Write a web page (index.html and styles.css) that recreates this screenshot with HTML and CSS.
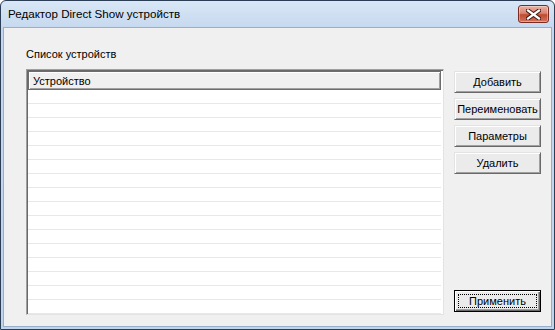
FILE: index.html
```html
<!DOCTYPE html>
<html lang="ru">
<head>
    <meta charset="UTF-8">
    <meta name="viewport" content="width=device-width, initial-scale=1.0">
    <title>Редактор Direct Show устройств</title>

    <link rel="stylesheet" href="styles.css">
</head>
<body>
    <div class="window">
        <div class="titlebar">
            <span class="title">Редактор Direct Show устройств</span>
            <button class="close" title="Закрыть">
                <svg width="15" height="11" viewBox="0 0 15 11">
                    <path d="M2 1.5 L13 9.5 M13 1.5 L2 9.5" stroke="#3b1a14" stroke-width="4.2" stroke-linecap="square"/>
                    <path d="M2 1.5 L13 9.5 M13 1.5 L2 9.5" stroke="#ffffff" stroke-width="2.2" stroke-linecap="square"/>
                </svg>
            </button>
        </div>

        <div class="client">
            <label class="caption">Список устройств</label>

            <div class="body">
                <div class="listview">
                    <div class="lv-header"><span>Устройство</span></div>
                    <div class="lv-rows">
                        <div class="row"></div>
                        <div class="row"></div>
                        <div class="row"></div>
                        <div class="row"></div>
                        <div class="row"></div>
                        <div class="row"></div>
                        <div class="row"></div>
                        <div class="row"></div>
                        <div class="row"></div>
                        <div class="row"></div>
                        <div class="row"></div>
                        <div class="row"></div>
                        <div class="row"></div>
                        <div class="row"></div>
                        <div class="row"></div>
                        <div class="row"></div>
                    </div>
                </div>

                <div class="actions">
                    <button class="btn">Добавить</button>
                    <button class="btn">Переименовать</button>
                    <button class="btn">Параметры</button>
                    <button class="btn">Удалить</button>
                    <button class="btn default"><span class="focus">Применить</span></button>
                </div>
            </div>
        </div>
    </div>
</body>
</html>
```

FILE: styles.css
```css
*{
    box-sizing: border-box;
}

body{
    margin: 0;
    font-family: "Liberation Sans", Arial, sans-serif;
    font-size: 11px;
    color: #000;
    background: #fff;
}

.window{
    width: 555px;
    height: 330px;
    display: flex;
    flex-direction: column;
    border: 1px solid #2c3e56;
    border-radius: 6px 6px 0 0;
    background: linear-gradient(#d9e7f6, #c4d7ee 30px, #c0d4ec);
}

.titlebar{
    height: 28px;
    display: flex;
    align-items: flex-start;
    justify-content: space-between;
}

.title{
    padding: 5px 0 0 7px;
    font-size: 11.6px;
    line-height: 16px;
    color: #000;
}

.close{
    width: 31px;
    height: 18px;
    margin: 4px 5px 0 0;
    padding: 0;
    display: flex;
    align-items: center;
    justify-content: center;
    border: 1px solid #7a2c22;
    border-radius: 3px;
    background: linear-gradient(#eab0a2, #d98572 45%, #c24a32 55%, #d2745c);
    box-shadow: inset 0 0 0 1px rgba(255, 255, 255, 0.35);
}

.client{
    flex: 1;
    margin: 0 2px 2px 2px;
    padding: 19px 10px 11px 22px;
    display: flex;
    flex-direction: column;
    background-color: #f0f0f0;
    border: 1px solid #98afcc;
}

.caption{
    line-height: 15px;
    margin-bottom: 7px;
}

.body{
    flex: 1;
    display: flex;
    gap: 10px;
}

.listview{
    flex: 1;
    overflow: hidden;
    background-color: #fff;
    border: 1px solid;
    border-color: #a0a0a0 #e3e3e3 #e3e3e3 #a0a0a0;
    box-shadow: inset 1px 1px 0 #696969;
    padding: 1px 0 0 1px;
}

.lv-header{
    width: calc(100% - 2px);
    height: 19px;
    padding: 2px 0 0 4px;
    line-height: 14px;
    background-color: #f0f0f0;
    border: 1px solid #6d6d6d;
    box-shadow: inset 1px 1px 0 #fff, inset -1px -1px 0 #a0a0a0;
}

.row{
    height: 14px;
    border-bottom: 1px solid #e8e8e8;
    margin-right: 2px;
}

.actions{
    width: 87px;
    padding: 2px 0 3px;
    display: flex;
    flex-direction: column;
    gap: 5px;
}

.btn{
    height: 22px;
    padding: 0;
    font-family: inherit;
    font-size: 11px;
    color: #000;
    background-color: #ebebeb;
    border: 1px solid;
    border-color: #e3e3e3 #696969 #696969 #e3e3e3;
    box-shadow: inset 1px 1px 0 #fff, inset -1px -1px 0 #a0a0a0;
}

.btn.default{
    margin-top: auto;
    padding: 3px;
    border-color: #000;
    box-shadow: inset 1px 1px 0 #fff, inset -1px -1px 0 #696969, inset -2px -2px 0 #a0a0a0;
}

.focus{
    display: block;
    height: 100%;
    line-height: 12px;
    border: 1px dotted #000;
}
```
